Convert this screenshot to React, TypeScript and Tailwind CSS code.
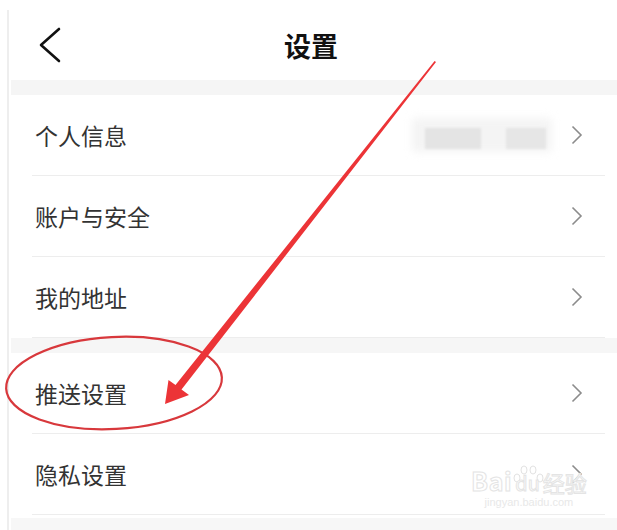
import React from 'react';

const rows = [
  ['个人信息', '账户与安全', '我的地址'],
  ['推送设置', '隐私设置'],
];

const Chevron = () => (
  <svg width="12" height="20" viewBox="0 0 12 20" className="shrink-0">
    <path d="M1.5 1.5 L10 10 L1.5 18.5" fill="none" stroke="#8c8c8c" strokeWidth="1.6" />
  </svg>
);

const Row = ({ label, first }: { label: string; first: boolean }) => (
  <div>
    <div className="flex items-center h-[80px] pl-[26px] pr-[34px]">
      <span className="flex-1 text-[23px] text-[#333333] leading-none">{label}</span>
      {first && (
        <div className="relative mr-[19px] w-[140px] h-[34px]">
          <div className="absolute inset-0 bg-[#f4f4f4] blur-[4px] rounded" />
          <div className="absolute left-[13px] top-[10px] w-[56px] h-[21px] bg-[#e4e4e4] blur-[1px]" />
          <div className="absolute left-[94px] top-[10px] w-[40px] h-[21px] bg-[#e6e6e6] blur-[1px]" />
        </div>
      )}
      <Chevron />
    </div>
    <div className="ml-[23px] mr-[12px] h-px bg-[#ededed]" />
  </div>
);

const stroke = { WebkitTextStroke: '1px #e4e4e4' };

export default function App() {
  return (
    <div
      className="relative w-[617px] h-[530px] bg-white overflow-hidden"
      style={{ fontFamily: '"Noto Sans CJK SC", "Noto Sans", sans-serif' }}
    >
      <div className="ml-[7px] mt-[10px] h-[520px] border-l-2 border-[#eeeeee] flex flex-col">
        <div className="flex items-center h-[70px]">
          <div className="w-[80px] pl-[29px] flex items-center">
            <svg width="24" height="36" viewBox="0 0 24 36">
              <path d="M21 2 L3 18 L21 34" fill="none" stroke="#111111" strokeWidth="2.6" strokeLinecap="round" strokeLinejoin="round" />
            </svg>
          </div>
          <div className="flex-1 text-center text-[27px] font-bold text-[#111111] leading-none">设置</div>
          <div className="w-[84px]" />
        </div>
        <div className="h-[15px] bg-[#f5f5f5] ml-[2px]" />
        {rows[0].map((l, i) => (
          <Row key={l} label={l} first={i === 0} />
        ))}
        <div className="h-[15px] bg-[#f6f6f6] ml-[2px]" />
        {rows[1].map((l) => (
          <Row key={l} label={l} first={false} />
        ))}
        <div className="h-[3px]" />
        <div className="flex-1 bg-[#f7f7f7] ml-[2px]" />
      </div>

      <svg className="absolute inset-0 pointer-events-none" width="617" height="530" viewBox="0 0 617 530">
        <ellipse cx="114" cy="383" rx="108" ry="46" fill="none" stroke="#d8383c" strokeWidth="2.2" transform="rotate(-3 114 383)" />
        <polygon
          points="434.6,61 436,62 181.5,389.5 189,395 165,404 168.5,380 175.5,385"
          fill="#ec3437"
        />
        <g fill="white" stroke="#e2e2e2" strokeWidth="1">
          <ellipse cx="517" cy="478" rx="3" ry="4" />
          <ellipse cx="524" cy="470" rx="3" ry="4" />
          <ellipse cx="533" cy="470" rx="3" ry="4" />
          <ellipse cx="540" cy="478" rx="3" ry="4" />
        </g>
      </svg>

      <div className="absolute left-[471px] top-[468px] flex flex-col items-center pointer-events-none select-none">
        <div className="flex items-end leading-none">
          <span className="text-[25px] font-bold text-white tracking-wide" style={stroke}>Bai</span>
          <span className="mx-[3px] text-[20px] text-white" style={stroke}>du</span>
          <span className="text-[22px] text-white" style={stroke}>经验</span>
        </div>
        <span className="text-[11px] text-[#e8e8e8] leading-none mt-[4px]" style={{ fontFamily: '"Liberation Sans", sans-serif' }}>jingyan.baidu.com</span>
      </div>
    </div>
  );
}
